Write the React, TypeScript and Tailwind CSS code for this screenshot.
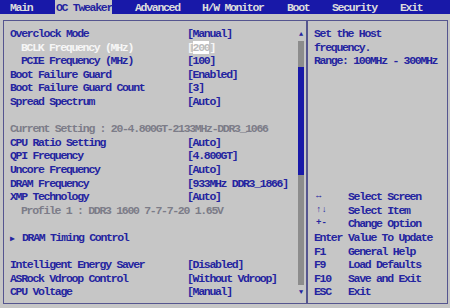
import React from 'react';

type Row = {
  label?: string;
  value?: string;
  indent?: boolean;
  tone?: 'blue' | 'gray' | 'white';
  arrow?: boolean;
};

const rows: Row[] = [
  { label: 'Overclock Mode', value: '[Manual]' },
  { label: 'BCLK Frequency (MHz)', value: '200', indent: true, tone: 'white' },
  { label: 'PCIE Frequency (MHz)', value: '[100]', indent: true },
  { label: 'Boot Failure Guard', value: '[Enabled]' },
  { label: 'Boot Failure Guard Count', value: '[3]' },
  { label: 'Spread Spectrum', value: '[Auto]' },
  {},
  { label: 'Current Setting : 20-4.800GT-2133MHz-DDR3_1066', tone: 'gray' },
  { label: 'CPU Ratio Setting', value: '[Auto]' },
  { label: 'QPI Frequency', value: '[4.800GT]' },
  { label: 'Uncore Frequency', value: '[Auto]' },
  { label: 'DRAM Frequency', value: '[933MHz DDR3_1866]' },
  { label: 'XMP Technology', value: '[Auto]' },
  { label: 'Profile 1 : DDR3 1600 7-7-7-20 1.65V', indent: true, tone: 'gray' },
  {},
  { label: 'DRAM Timing Control', arrow: true },
  {},
  { label: 'Intelligent Energy Saver', value: '[Disabled]' },
  { label: 'ASRock Vdroop Control', value: '[Without Vdroop]' },
  { label: 'CPU Voltage', value: '[Manual]' },
];

const keys = [
  ['↔', 'Select Screen'],
  ['↑↓', 'Select Item'],
  ['+-', 'Change Option'],
  ['Enter', 'Value To Update'],
  ['F1', 'General Help'],
  ['F9', 'Load Defaults'],
  ['F10', 'Save and Exit'],
  ['ESC', 'Exit'],
];

const tabs = [
  { name: 'Main', cls: 'w-[55px] pl-[10px]' },
  { name: 'OC Tweaker', cls: 'w-[57px] pl-[1px] bg-[#c6c6c6] text-[#2424a0]' },
  { name: 'Advanced', cls: 'w-[90px] pl-[23px]' },
  { name: 'H/W Monitor', cls: 'w-[85px]' },
  { name: 'Boot', cls: 'w-[45px]' },
  { name: 'Security', cls: 'w-[68px]' },
  { name: 'Exit', cls: 'w-[50px]' },
];

export default function App() {
  return (
    <div
      className="w-[450px] h-[308px] bg-[#c6c6c6] font-bold text-[11.5px] tracking-[-1.3px] leading-[13.6px] text-[#2424a0] overflow-hidden"
      style={{ fontFamily: '"Liberation Mono", "DejaVu Sans Mono", monospace' }}
    >
      {/* menu bar */}
      <div className="h-[14px] bg-[#1818a8] flex items-center text-[#dcdcdc]">
        {tabs.map((t) => (
          <div key={t.name} className={`h-full flex items-center pt-[1px] whitespace-pre ${t.cls}`}>
            {t.name}
          </div>
        ))}
      </div>

      <div className="mt-[6px] ml-[3px] w-[445px] h-[284px] border border-[#55558f] flex">
        {/* settings list */}
        <div className="w-[302px] flex pl-[6px] pt-[6px]">
          <div className="flex-1">
            {rows.map((r, i) => (
              <div key={i} className="h-[13.6px] flex whitespace-pre">
                <div
                  className={`w-[177px] shrink-0 ${r.indent ? 'pl-[11px]' : ''} ${
                    r.tone === 'gray' ? 'text-[#7c7c88]' : r.tone === 'white' ? 'text-[#f6f6f6]' : ''
                  }`}
                >
                  {r.arrow && <span className="inline-block w-[12px] text-[8px] tracking-normal">▶</span>}
                  {r.label ?? ''}
                </div>
                {r.tone === 'white' ? (
                  <div className="text-[#f6f6f6]">
                    [<span className="bg-white text-[#bcbcbc]">{r.value}</span>]
                  </div>
                ) : (
                  <div>{r.value ?? ''}</div>
                )}
              </div>
            ))}
          </div>
          {/* scrollbar */}
          <div className="w-[6px] mr-[2px] flex flex-col items-center">
            <div className="h-[14px] flex items-center text-[7px] leading-none tracking-normal">▲</div>
            <div className="flex-1 w-[6px] bg-[#8c8c8c] flex flex-col">
              <div className="h-[26px]" />
              <div className="h-[108px] bg-[#1818a8]" />
            </div>
            <div className="h-[14px] flex items-center text-[7px] leading-none tracking-normal">▼</div>
            <div className="h-[4px]" />
          </div>
        </div>

        {/* help panel */}
        <div className="flex-1 border-l-2 border-[#55558f] pl-[6px] pt-[6px] pb-[4px] flex flex-col">
          <div>Set the Host</div>
          <div>frequency.</div>
          <div className="whitespace-pre">Range: 100MHz - 300MHz</div>
          <div className="mt-auto">
            {keys.map(([k, d]) => (
              <div key={k} className="h-[13.6px] flex whitespace-pre">
                <div className={`w-[34px] ${k.length < 3 && k !== 'F1' && k !== 'F9' ? 'pl-[2px] text-[9px] tracking-normal' : ''}`}>{k}</div>
                <div>{d}</div>
              </div>
            ))}
          </div>
        </div>
      </div>
    </div>
  );
}
